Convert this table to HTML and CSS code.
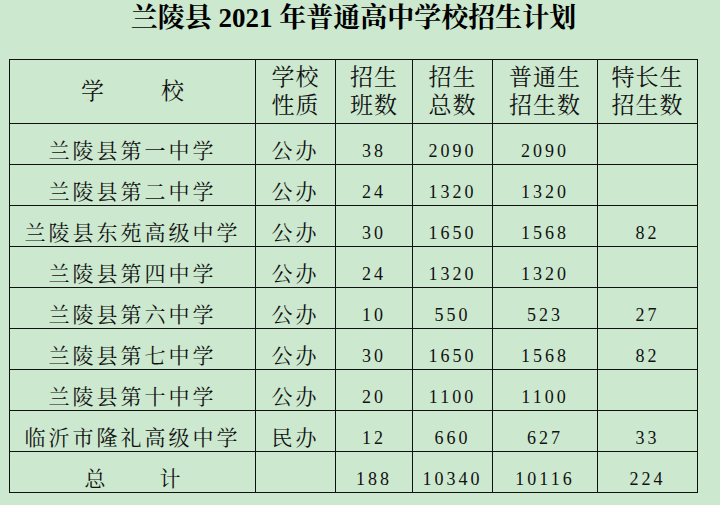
FILE: index.html
```html
<!DOCTYPE html>
<html lang="zh-CN">
<head>
<meta charset="utf-8">
<title>兰陵县 2021 年普通高中学校招生计划</title>
<link rel="stylesheet" href="styles.css">
</head>
<body>
<div class="page">
  <h1 class="title">兰陵县 2021 年普通高中学校招生计划</h1>
  <table class="plan">
    <colgroup>
      <col class="c-school">
      <col class="c-type">
      <col class="c-cls">
      <col class="c-total">
      <col class="c-normal">
      <col class="c-special">
    </colgroup>
    <thead>
      <tr class="head">
        <th><div class="spread"><span>学</span><span>校</span></div></th>
        <th>学校<br>性质</th>
        <th>招生<br>班数</th>
        <th>招生<br>总数</th>
        <th>普通生<br>招生数</th>
        <th>特长生<br>招生数</th>
      </tr>
    </thead>
    <tbody>
      <tr><td class="name">兰陵县第一中学</td><td class="cn">公办</td><td class="num">38</td><td class="num">2090</td><td class="num">2090</td><td class="num"></td></tr>
      <tr><td class="name">兰陵县第二中学</td><td class="cn">公办</td><td class="num">24</td><td class="num">1320</td><td class="num">1320</td><td class="num"></td></tr>
      <tr><td class="name">兰陵县东苑高级中学</td><td class="cn">公办</td><td class="num">30</td><td class="num">1650</td><td class="num">1568</td><td class="num">82</td></tr>
      <tr><td class="name">兰陵县第四中学</td><td class="cn">公办</td><td class="num">24</td><td class="num">1320</td><td class="num">1320</td><td class="num"></td></tr>
      <tr><td class="name">兰陵县第六中学</td><td class="cn">公办</td><td class="num">10</td><td class="num">550</td><td class="num">523</td><td class="num">27</td></tr>
      <tr><td class="name">兰陵县第七中学</td><td class="cn">公办</td><td class="num">30</td><td class="num">1650</td><td class="num">1568</td><td class="num">82</td></tr>
      <tr><td class="name">兰陵县第十中学</td><td class="cn">公办</td><td class="num">20</td><td class="num">1100</td><td class="num">1100</td><td class="num"></td></tr>
      <tr><td class="name">临沂市隆礼高级中学</td><td class="cn">民办</td><td class="num">12</td><td class="num">660</td><td class="num">627</td><td class="num">33</td></tr>
      <tr class="sum"><td class="name"><div class="spread"><span>总</span><span>计</span></div></td><td class="cn"></td><td class="num">188</td><td class="num">10340</td><td class="num">10116</td><td class="num">224</td></tr>
    </tbody>
  </table>
</div>
</body>
</html>
```

FILE: styles.css
```css
html, body {
  margin: 0;
  padding: 0;
  background: #cce8cf;
}

body {
  width: 720px;
  height: 505px;
  overflow: hidden;
  color: #111;
  font-family: "Liberation Serif", "Noto Serif CJK SC", "Noto Sans CJK SC", serif;
}

.page {
  padding-left: 9px;
  width: 689px;
}

.title {
  margin: 0;
  height: 59px;
  box-sizing: border-box;
  padding-top: 2px;
  font-size: 27px;
  line-height: 32px;
  font-weight: bold;
  text-align: center;
  color: #000;
}

.plan {
  border-collapse: collapse;
  table-layout: fixed;
  width: 689px;
}

.c-school { width: 246px; }
.c-type { width: 80px; }
.c-cls { width: 77px; }
.c-total { width: 80px; }
.c-normal { width: 105px; }
.c-special { width: 100px; }

.plan th,
.plan td {
  border: 1px solid #111;
  padding: 0;
  text-align: center;
}

.head th {
  height: 63px;
  font-size: 23px;
  line-height: 28px;
  font-weight: normal;
  letter-spacing: 1px;
  vertical-align: middle;
}

.spread {
  display: flex;
  justify-content: center;
  gap: 57px;
}

.head .spread {
  letter-spacing: 0;
}

.plan td {
  height: 40px;
  line-height: 26px;
  vertical-align: bottom;
  letter-spacing: 3px;
}

.name,
.cn {
  font-size: 21px;
}

.num {
  font-size: 18px;
  padding-bottom: 1px;
}

.sum .spread {
  gap: 54px;
  letter-spacing: 0;
}
```
